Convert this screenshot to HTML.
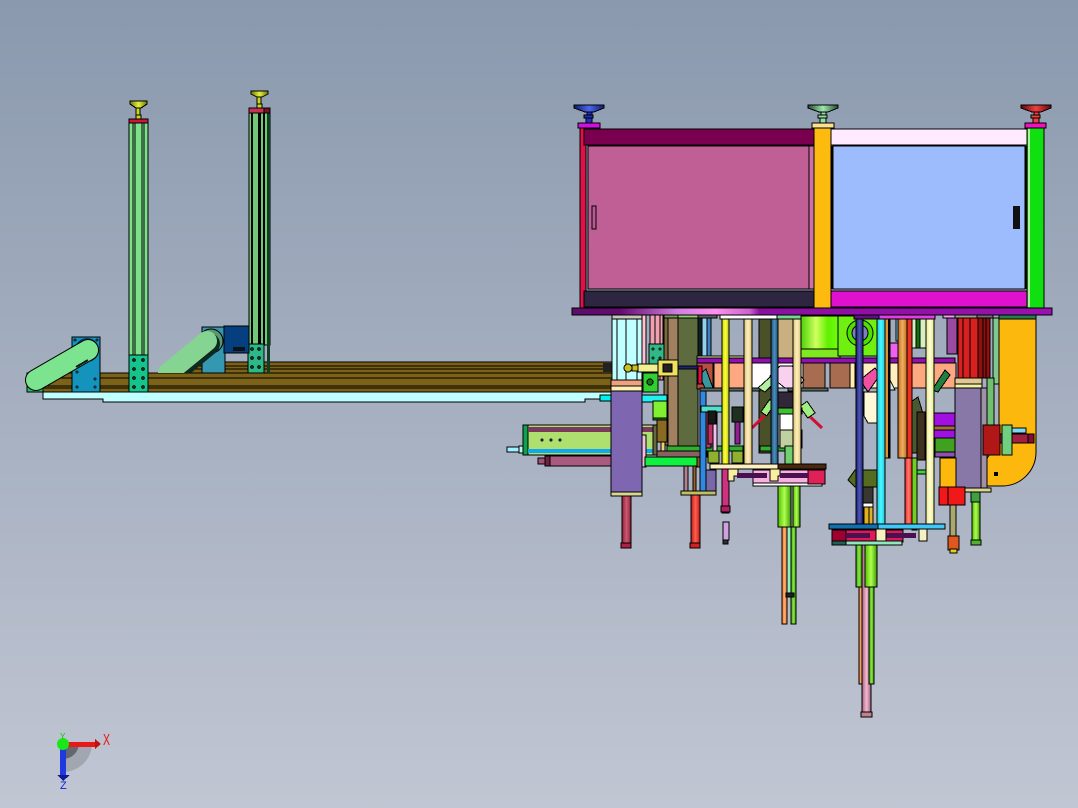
<!DOCTYPE html>
<html><head><meta charset="utf-8"><style>
html,body{margin:0;padding:0;background:#a0abba}
svg{display:block}
rect,path,circle,ellipse,polygon{stroke:#000;stroke-width:1}
.n{stroke:none}
line{stroke:#000;stroke-width:1}
</style></head><body>
<svg width="1078" height="808" viewBox="0 0 1078 808" xmlns="http://www.w3.org/2000/svg" shape-rendering="crispEdges">
<defs>
<linearGradient id="bg" x1="0" y1="0" x2="0" y2="1"><stop offset="0" stop-color="#8a99ae"/><stop offset="1" stop-color="#c1c6d3"/></linearGradient>
<linearGradient id="base" x1="0" y1="0" x2="1" y2="0"><stop offset="0" stop-color="#5a0f6a"/><stop offset=".1" stop-color="#650a70"/><stop offset=".22" stop-color="#d080e0"/><stop offset=".3" stop-color="#ff90f0"/><stop offset=".37" stop-color="#d060d0"/><stop offset=".39" stop-color="#8a10a0"/><stop offset="1" stop-color="#9a10b0"/></linearGradient>
<linearGradient id="g1" x1="0" y1="0" x2="1" y2="0"><stop offset="0" stop-color="#4fc000"/><stop offset=".5" stop-color="#b0ff50"/><stop offset="1" stop-color="#3a9a00"/></linearGradient>
<linearGradient id="gm" x1="0" y1="0" x2="1" y2="0"><stop offset="0" stop-color="#3fd000"/><stop offset=".4" stop-color="#d0ff60"/><stop offset=".7" stop-color="#60f000"/><stop offset="1" stop-color="#70ff10"/></linearGradient>
<linearGradient id="pk" x1="0" y1="0" x2="1" y2="0"><stop offset="0" stop-color="#a06080"/><stop offset=".5" stop-color="#f5b8d0"/><stop offset="1" stop-color="#a06080"/></linearGradient>
<linearGradient id="rd" x1="0" y1="0" x2="1" y2="0"><stop offset="0" stop-color="#c01818"/><stop offset=".5" stop-color="#ff6050"/><stop offset="1" stop-color="#c01818"/></linearGradient>
<linearGradient id="rd2" x1="0" y1="0" x2="1" y2="0"><stop offset="0" stop-color="#8a2038"/><stop offset=".5" stop-color="#d05870"/><stop offset="1" stop-color="#8a2038"/></linearGradient>
<linearGradient id="yl" x1="0" y1="0" x2="1" y2="0"><stop offset="0" stop-color="#c8d800"/><stop offset=".5" stop-color="#ffff40"/><stop offset="1" stop-color="#b0c000"/></linearGradient>
<linearGradient id="cr" x1="0" y1="0" x2="1" y2="0"><stop offset="0" stop-color="#d8c070"/><stop offset=".5" stop-color="#fff0c0"/><stop offset="1" stop-color="#d8c070"/></linearGradient>
<linearGradient id="bl" x1="0" y1="0" x2="1" y2="0"><stop offset="0" stop-color="#204a70"/><stop offset=".5" stop-color="#4a90c0"/><stop offset="1" stop-color="#204a70"/></linearGradient>
<linearGradient id="nv" x1="0" y1="0" x2="1" y2="0"><stop offset="0" stop-color="#1a1f70"/><stop offset=".5" stop-color="#5058b8"/><stop offset="1" stop-color="#1a1f70"/></linearGradient>
<linearGradient id="cy" x1="0" y1="0" x2="1" y2="0"><stop offset="0" stop-color="#10c8e0"/><stop offset=".5" stop-color="#50f8ff"/><stop offset="1" stop-color="#10c8e0"/></linearGradient>
<linearGradient id="or" x1="0" y1="0" x2="1" y2="0"><stop offset="0" stop-color="#c06a20"/><stop offset=".5" stop-color="#f0b060"/><stop offset="1" stop-color="#c06a20"/></linearGradient>
<linearGradient id="ry" x1="0" y1="0" x2="1" y2="0"><stop offset="0" stop-color="#f02020"/><stop offset=".5" stop-color="#ff8070"/><stop offset="1" stop-color="#f02020"/></linearGradient>
<linearGradient id="cl" x1="0" y1="0" x2="1" y2="0"><stop offset="0" stop-color="#e8e890"/><stop offset=".5" stop-color="#ffffd0"/><stop offset="1" stop-color="#e8e890"/></linearGradient>
<linearGradient id="gr" x1="0" y1="0" x2="1" y2="0"><stop offset="0" stop-color="#309a10"/><stop offset=".5" stop-color="#90e840"/><stop offset="1" stop-color="#309a10"/></linearGradient>
<linearGradient id="og" x1="0" y1="0" x2="1" y2="0"><stop offset="0" stop-color="#f07028"/><stop offset=".5" stop-color="#ffb070"/><stop offset="1" stop-color="#f07028"/></linearGradient>
<linearGradient id="wb" x1="0" y1="0" x2="1" y2="0"><stop offset="0" stop-color="#101a70"/><stop offset=".5" stop-color="#4a68e8"/><stop offset="1" stop-color="#101a70"/></linearGradient>
<linearGradient id="wg" x1="0" y1="0" x2="1" y2="0"><stop offset="0" stop-color="#204a30"/><stop offset=".5" stop-color="#a0e8b0"/><stop offset="1" stop-color="#204a30"/></linearGradient>
<linearGradient id="wr" x1="0" y1="0" x2="1" y2="0"><stop offset="0" stop-color="#600808"/><stop offset=".5" stop-color="#f04040"/><stop offset="1" stop-color="#600808"/></linearGradient>
<linearGradient id="wy" x1="0" y1="0" x2="1" y2="0"><stop offset="0" stop-color="#707800"/><stop offset=".5" stop-color="#e8f040"/><stop offset="1" stop-color="#707800"/></linearGradient>
</defs>
<rect class="n" width="1078" height="808" fill="url(#bg)"/>

<!-- conveyor rails -->
<rect x="190" y="362" width="422" height="11" fill="#7b6216"/>
<line x1="190" y1="366" x2="612" y2="366"/><line x1="190" y1="369" x2="612" y2="369"/>
<rect x="27" y="373" width="16" height="19" fill="#20c070"/>
<rect x="43" y="373" width="569" height="19" fill="#7b6216"/>
<line x1="43" y1="378" x2="612" y2="378"/><line x1="43" y1="386" x2="612" y2="386"/><line x1="43" y1="388" x2="612" y2="388"/>
<path d="M43 392H612V399H585V402H103V399H43Z" fill="#c0ffff"/>
<rect x="600" y="395" width="12" height="6" fill="#00f0f0"/>
<rect class="n" x="603" y="363" width="9" height="9" fill="#222"/>

<!-- left column -->
<rect x="129" y="122" width="19" height="234" fill="#7ce08a"/>
<line x1="133" y1="122" x2="133" y2="355"/><line x1="135" y1="122" x2="135" y2="355"/><line x1="142" y1="122" x2="142" y2="355"/><line x1="144" y1="122" x2="144" y2="355"/>
<rect x="129" y="119" width="19" height="4" fill="#d0143c"/>
<rect x="129" y="355" width="19" height="37" fill="#14c48c"/>
<g fill="#103020"><circle class="n" cx="134" cy="360" r="2"/><circle class="n" cx="143" cy="360" r="2"/><circle class="n" cx="134" cy="369" r="2"/><circle class="n" cx="143" cy="369" r="2"/><circle class="n" cx="134" cy="378" r="2"/><circle class="n" cx="143" cy="378" r="2"/><circle class="n" cx="134" cy="387" r="2"/><circle class="n" cx="143" cy="387" r="2"/></g>
<rect x="136" y="115" width="5" height="4" fill="#c8d820"/><rect x="136" y="108" width="4" height="7" fill="#c8d820"/>
<path d="M130 101H147V104L141 108H136L130 104Z" fill="url(#wy)"/>

<!-- second column -->
<rect x="249" y="113" width="21" height="232" fill="#70c878"/>
<rect class="n" x="251" y="113" width="2" height="232" fill="#000"/><rect class="n" x="258" y="113" width="3" height="232" fill="#000"/><rect class="n" x="263" y="113" width="2" height="232" fill="#000"/><rect class="n" x="267" y="113" width="3" height="260" fill="#0f3f20"/>
<rect x="249" y="108" width="15" height="5" fill="#c83058"/><rect x="264" y="108" width="6" height="5" fill="#7a1028"/>
<rect x="248" y="344" width="16" height="29" fill="#2cb888"/>
<g fill="#103020"><circle class="n" cx="252" cy="349" r="2"/><circle class="n" cx="259" cy="349" r="2"/><circle class="n" cx="252" cy="358" r="2"/><circle class="n" cx="259" cy="358" r="2"/><circle class="n" cx="252" cy="367" r="2"/><circle class="n" cx="259" cy="367" r="2"/></g>
<rect x="257" y="104" width="5" height="4" fill="#c8d820"/><rect x="257" y="97" width="4" height="7" fill="#c8d820"/>
<path d="M251 91H268V94L262 97H257L251 94Z" fill="url(#wy)"/>

<!-- motor & blue plates -->
<rect x="202" y="327" width="23" height="46" fill="#3498b0"/>
<rect x="224" y="326" width="25" height="27" fill="#053f80"/>
<rect class="n" x="233" y="347" width="12" height="4" fill="#111"/>
<rect x="72" y="337" width="28" height="55" fill="#1494bc"/>
<g fill="#103040"><circle class="n" cx="77" cy="372" r="1.5"/><circle class="n" cx="95" cy="379" r="1.5"/><circle class="n" cx="77" cy="387" r="1.5"/><circle class="n" cx="95" cy="387" r="1.5"/><circle class="n" cx="75" cy="340" r="1.5"/><circle class="n" cx="97" cy="340" r="1.5"/></g>
<circle cx="87" cy="350" r="11" fill="none" style="stroke:#0a3a70;stroke-width:2" shape-rendering="auto"/>
<line x1="36" y1="380" x2="88" y2="350" style="stroke:#000;stroke-width:22;stroke-linecap:round" shape-rendering="auto"/>
<line x1="36" y1="380" x2="88" y2="350" style="stroke:#7ce48e;stroke-width:20;stroke-linecap:round" shape-rendering="auto"/>
<path d="M76 367L88 360" style="stroke:#102020;stroke-width:2" fill="none"/>
<circle cx="211" cy="341" r="12" fill="#5a9a70" shape-rendering="auto"/>
<svg x="0" y="0" width="1078" height="373" overflow="hidden">
<line x1="170" y1="376" x2="209" y2="344" style="stroke:#0e2a20;stroke-width:22;stroke-linecap:round" shape-rendering="auto"/>
<line x1="168" y1="373" x2="207" y2="341" style="stroke:#86d492;stroke-width:20;stroke-linecap:round" shape-rendering="auto"/>
</svg>

<!-- cabinet -->
<rect x="580" y="128" width="6" height="180" fill="#e01048"/>
<rect x="584" y="129" width="230" height="16" fill="#7a004f"/>
<rect x="588" y="146" width="221" height="143" fill="#bf5f95"/>
<rect x="809" y="146" width="5" height="143" fill="#d070a8"/>
<rect x="592" y="206" width="4" height="23" fill="#b85890"/>
<rect x="584" y="291" width="230" height="16" fill="#2e2540"/>
<rect x="831" y="129" width="196" height="16" fill="#ffeaff"/>
<rect x="833" y="146" width="192" height="143" fill="#9dbcfd"/>
<rect class="n" x="831" y="146" width="2" height="143" fill="#000"/><rect class="n" x="1025" y="146" width="2" height="143" fill="#000"/>
<rect class="n" x="1013" y="206" width="7" height="23" fill="#111"/>
<rect x="831" y="291" width="196" height="16" fill="#e010cf"/>
<rect x="814" y="128" width="17" height="180" fill="#fdbb10"/>
<rect x="1027" y="128" width="17" height="180" fill="#10e010"/>
<rect class="n" x="1028" y="129" width="2" height="178" fill="#b0f0a0"/>
<rect x="578" y="123" width="22" height="5" fill="#d010e0"/>
<rect x="812" y="123" width="22" height="5" fill="#fde090"/>
<rect x="1025" y="123" width="21" height="5" fill="#f010c0"/>
<rect x="572" y="308" width="480" height="7" fill="url(#base)"/>
<!-- handwheels -->
<rect x="586" y="117" width="6" height="6" fill="#2030c0"/><rect x="584" y="115" width="9" height="3" fill="#2030c0"/><rect x="587" y="111" width="5" height="4" fill="#2030c0"/>
<path d="M574 105H604V108L594 112H585L574 108Z" fill="url(#wb)"/>
<rect x="820" y="117" width="6" height="6" fill="#90e0a0"/><rect x="818" y="115" width="9" height="3" fill="#90e0a0"/><rect x="821" y="111" width="5" height="4" fill="#90e0a0"/>
<path d="M808 105H838V108L828 112H819L808 108Z" fill="url(#wg)"/>
<rect x="1033" y="117" width="6" height="6" fill="#f04040"/><rect x="1031" y="115" width="9" height="3" fill="#f04040"/><rect x="1034" y="111" width="5" height="4" fill="#f04040"/>
<path d="M1021 105H1051V108L1041 112H1032L1021 108Z" fill="url(#wr)"/>

<!-- under-plate top row -->
<rect x="612" y="319" width="30" height="61" fill="#c0ffff"/>
<line x1="617" y1="319" x2="617" y2="380"/><line x1="626" y1="319" x2="626" y2="380"/><line x1="637" y1="319" x2="637" y2="380"/>
<rect x="642" y="315" width="4" height="65" fill="#ffc0d0"/>
<rect x="650" y="315" width="13" height="65" fill="#f0a0b0"/><line x1="655" y1="315" x2="655" y2="380"/><line x1="660" y1="315" x2="660" y2="380"/>
<rect x="664" y="315" width="4" height="130" fill="#7a6a40"/>
<rect x="668" y="315" width="10" height="132" fill="#a08060"/>
<rect x="678" y="315" width="20" height="132" fill="#5e6b3e"/>
<rect x="698" y="318" width="4" height="38" fill="#102020"/><rect x="702" y="318" width="5" height="38" fill="#90d0f0"/><rect x="707" y="318" width="4" height="38" fill="#4080c0"/>
<rect x="759" y="318" width="12" height="135" fill="#4a5028"/>
<rect x="777" y="318" width="16" height="45" fill="#c8b080"/>
<rect x="649" y="344" width="15" height="22" fill="#30b888"/>
<g fill="#103020"><circle class="n" cx="653" cy="349" r="1.6"/><circle class="n" cx="660" cy="349" r="1.6"/><circle class="n" cx="653" cy="358" r="1.6"/><circle class="n" cx="660" cy="358" r="1.6"/></g>
<rect x="697" y="356" width="48" height="3" fill="#f0f0a0"/>
<rect x="697" y="358" width="258" height="5" fill="#9010b0"/>
<rect x="697" y="363" width="16" height="26" fill="#b85040"/>
<rect x="714" y="363" width="40" height="26" fill="#fca880"/>
<rect x="752" y="363" width="51" height="25" fill="#fff"/>
<rect x="803" y="363" width="22" height="25" fill="#a86c50"/>
<rect x="830" y="363" width="20" height="25" fill="#a86c50"/>
<rect x="850" y="363" width="5" height="25" fill="#ffeeb0"/>
<rect x="863" y="363" width="14" height="25" fill="#ffeec0"/>
<rect x="885" y="363" width="14" height="25" fill="#ffeec0"/>
<rect x="912" y="363" width="14" height="25" fill="#fca880"/>
<rect x="934" y="363" width="22" height="25" fill="#fca880"/>
<rect x="700" y="388" width="60" height="3" fill="#5a6a60"/>
<rect x="788" y="388" width="40" height="3" fill="#5a6a60"/>
<path d="M699 375L706 369L713 388H705Z" fill="#3898a0"/>
<rect x="698" y="366" width="4" height="18" fill="#e01040"/>
<path d="M758 388L780 368L785 372L765 392Z" fill="#b0f0a0"/>
<path d="M780 366L770 376L785 388H798L804 380L792 366Z" fill="#f8d0f0"/>
<path d="M868 392L860 380L875 368L880 375Z" fill="#f050a0"/>
<path d="M885 370L878 390H895Z" fill="#c8f0f8"/>
<path d="M932 390L945 370L950 375L938 392Z" fill="#208040"/>

<!-- mid-level mechanism left -->
<rect x="611" y="380" width="31" height="6" fill="#f0a080"/>
<rect x="611" y="386" width="31" height="5" fill="#fbf0b0"/>
<rect x="642" y="395" width="25" height="7" fill="#20f0f0"/>
<rect x="637" y="364" width="24" height="8" fill="#f0f090"/>
<circle cx="628" cy="368" r="4" fill="#c8c020"/>
<rect x="632" y="365" width="6" height="6" fill="#c8c020"/>
<rect x="658" y="360" width="20" height="16" fill="#f0e060"/>
<rect x="663" y="364" width="9" height="8" fill="#222"/>
<rect x="678" y="366" width="20" height="3" fill="#202080"/>
<rect x="643" y="373" width="15" height="19" fill="#30d030"/><circle cx="650" cy="382" r="3" fill="#187018"/>
<rect x="653" y="401" width="14" height="17" fill="#80f030"/><rect x="653" y="418" width="14" height="2" fill="#208020"/>
<rect x="657" y="420" width="10" height="22" fill="#8a6a20"/>
<rect x="661" y="442" width="4" height="20" fill="#f0d070"/>
<!-- left cylinder -->
<rect x="523" y="425" width="132" height="30" fill="#ade06f"/>
<rect x="523" y="425" width="5" height="30" fill="#10a050"/>
<rect class="n" x="528" y="427" width="127" height="5" fill="#7a3a60"/>
<rect class="n" x="528" y="449" width="127" height="4" fill="#10a8f0"/>
<g fill="#202020"><circle class="n" cx="542" cy="440" r="1.6"/><circle class="n" cx="551" cy="440" r="1.6"/><circle class="n" cx="560" cy="440" r="1.6"/></g>
<rect x="507" y="447" width="16" height="5" fill="#a0f0ff"/>
<rect x="519" y="446" width="4" height="7" fill="#c0f0f0"/>
<rect x="545" y="456" width="67" height="10" fill="#a85a80"/>
<rect x="538" y="458" width="7" height="6" fill="#a05070"/><rect x="545" y="456" width="5" height="10" fill="#702040"/>
<rect x="642" y="435" width="4" height="32" fill="#f0c0e0"/>
<rect x="653" y="425" width="4" height="30" fill="#686840"/>
<rect x="645" y="457" width="52" height="9" fill="#10f040"/>
<rect x="697" y="456" width="9" height="11" fill="#8a5a20"/>
<rect x="657" y="451" width="50" height="6" fill="#8a6060"/>
<rect x="700" y="425" width="6" height="26" fill="#8a5060"/>
<rect x="667" y="446" width="76" height="5" fill="#30b030"/>
<rect x="760" y="446" width="40" height="5" fill="#30b030"/>
<rect x="684" y="466" width="4" height="26" fill="#b08090"/>
<rect x="693" y="466" width="3" height="26" fill="#a06030"/>
<rect x="700" y="391" width="6" height="101" fill="#3088e0"/>
<rect x="706" y="470" width="10" height="24" fill="#7868a8"/>
<rect x="706" y="408" width="5" height="40" fill="#a04060"/>
<rect x="713" y="408" width="4" height="60" fill="#f0c0f0"/>
<rect x="701" y="406" width="26" height="6" fill="#50e0d0"/>
<rect x="708" y="411" width="8" height="13" fill="#181818"/>
<rect x="708" y="424" width="5" height="20" fill="#c03060"/>
<rect x="732" y="407" width="11" height="15" fill="#203020"/>
<rect x="735" y="422" width="5" height="22" fill="#902090"/>
<rect x="708" y="451" width="11" height="12" fill="#90b030"/>
<rect x="732" y="451" width="11" height="12" fill="#90b030"/>
<!-- center diagonal -->
<line x1="752" y1="428" x2="770" y2="410" style="stroke:#d01030;stroke-width:3" shape-rendering="auto"/>
<line x1="822" y1="428" x2="805" y2="412" style="stroke:#d01030;stroke-width:3" shape-rendering="auto"/>
<rect x="765" y="400" width="7" height="15" fill="#a0f080" transform="rotate(35 768 407)"/>
<rect x="803" y="403" width="9" height="14" fill="#a0f080" transform="rotate(-35 807 410)"/>
<rect x="777" y="392" width="16" height="18" fill="#302838"/>
<rect x="777" y="408" width="25" height="6" fill="#40c030"/>
<rect x="780" y="414" width="14" height="16" fill="#fff"/>
<rect x="780" y="430" width="22" height="18" fill="#c0d0a0"/>
<rect x="785" y="446" width="14" height="20" fill="#70d070"/>

<!-- gears and green motor -->
<rect x="800" y="316" width="40" height="42" fill="url(#gm)"/>
<rect x="800" y="349" width="40" height="9" fill="#80e820"/>
<rect x="838" y="316" width="40" height="40" fill="#70f010"/>
<circle cx="860" cy="333" r="13" fill="#50e000" shape-rendering="auto"/>
<circle cx="860" cy="333" r="8" fill="#7a80c0" shape-rendering="auto"/>
<!-- right side area -->
<rect x="896" y="319" width="3" height="22" fill="#80c8f0"/>
<rect x="890" y="343" width="8" height="15" fill="#f060f0"/>
<rect x="912" y="318" width="14" height="30" fill="#d8f0c0"/>
<rect x="916" y="318" width="4" height="30" fill="#107010"/>
<rect x="947" y="318" width="10" height="36" fill="#9a4aa0"/>
<rect x="884" y="318" width="6" height="140" fill="#e09030"/>
<rect x="888" y="318" width="2" height="140" class="n" fill="#000"/>
<path d="M864 392H884V412L877 423H868L864 416Z" fill="#fff8d8"/>
<path d="M899 410L918 397L925 420V453H899Z" fill="#4a5a30"/>
<rect x="917" y="412" width="8" height="48" fill="#403020"/>
<rect x="934" y="413" width="21" height="25" fill="#a010e0"/>
<rect x="934" y="426" width="21" height="4" fill="#a07030"/>
<rect x="935" y="438" width="20" height="14" fill="#40a020"/>
<rect x="935" y="452" width="20" height="5" fill="#9050b0"/>
<rect x="916" y="470" width="12" height="4" fill="#40d040"/>
<rect x="912" y="458" width="5" height="72" fill="#70d020"/>
<!-- olive assembly -->
<path d="M855 470H878L885 478L878 487H855L848 480Z" fill="#556b20" shape-rendering="auto"/>
<rect x="863" y="487" width="10" height="16" fill="#383830"/>
<rect x="863" y="503" width="10" height="4" fill="#fff"/>
<rect x="864" y="507" width="9" height="17" fill="#e0b020"/>
<line x1="869" y1="507" x2="869" y2="524"/>

<!-- long tubes -->
<rect x="722" y="318" width="7" height="146" fill="url(#yl)"/>
<rect x="744" y="318" width="8" height="146" fill="url(#cr)"/>
<rect x="771" y="318" width="7" height="146" fill="url(#bl)"/>
<rect x="793" y="318" width="8" height="146" fill="url(#cr)"/>
<rect x="856" y="318" width="7" height="206" fill="url(#nv)"/>
<rect x="877" y="318" width="8" height="206" fill="url(#cy)"/>
<rect x="905" y="457" width="7" height="67" fill="url(#ry)"/>
<rect x="907" y="318" width="5" height="140" fill="#f03020"/>
<rect x="898" y="318" width="9" height="140" fill="url(#or)"/>
<rect x="926" y="318" width="8" height="206" fill="url(#cl)"/>

<!-- top plate strips -->
<rect x="612" y="315" width="30" height="4" fill="#c8c8b8"/>
<rect x="664" y="315" width="14" height="3" fill="#70a050"/>
<rect x="678" y="315" width="20" height="3" fill="#90d070"/>
<rect x="698" y="315" width="19" height="3" fill="#606060"/>
<rect x="720" y="315" width="57" height="4" fill="#fff"/>
<rect x="777" y="315" width="24" height="4" fill="#70d890"/>
<rect x="854" y="315" width="25" height="4" fill="#601080"/>
<rect x="879" y="315" width="56" height="4" fill="#e040e0"/>
<rect x="943" y="315" width="12" height="3" fill="#f0a0f0"/>
<rect x="955" y="315" width="22" height="3" fill="#a0a090"/>
<rect x="977" y="315" width="16" height="3" fill="#707070"/>

<!-- red columns and grey block -->
<rect x="958" y="318" width="20" height="60" fill="#d82020"/>
<line x1="963" y1="318" x2="963" y2="378"/><line x1="970" y1="318" x2="970" y2="378"/>
<rect x="978" y="318" width="12" height="60" fill="#901010"/>
<line x1="983" y1="318" x2="983" y2="378"/><line x1="986" y1="318" x2="986" y2="378"/>
<!-- big orange bracket -->
<path d="M999 316H1036V452A34 34 0 0 1 1002 486H986V460L999 440Z" fill="#fdb80e" shape-rendering="auto"/>
<rect x="999" y="315" width="37" height="4" fill="#208050"/>
<rect class="n" x="994" y="472" width="4" height="4" fill="#000"/>
<rect x="993" y="318" width="6" height="66" fill="#80c890"/>
<rect x="987" y="378" width="7" height="58" fill="#70c070"/>
<rect x="981" y="388" width="6" height="102" fill="#a090a8"/>
<rect x="955" y="378" width="27" height="6" fill="#e0c890"/>
<rect x="955" y="384" width="27" height="4" fill="#f0f0a0"/>
<rect x="955" y="388" width="26" height="100" fill="#8878a8"/>
<rect x="955" y="488" width="36" height="4" fill="#d8d890"/>
<rect x="983" y="425" width="17" height="30" fill="#b01818"/>
<rect x="1000" y="434" width="30" height="9" fill="#a02040"/>
<rect x="1028" y="434" width="6" height="9" fill="#801030"/>
<rect x="1002" y="425" width="10" height="30" fill="#70d080"/>
<rect x="1012" y="428" width="14" height="5" fill="#80d8f0"/>
<!-- orange/red box -->
<rect x="940" y="458" width="16" height="29" fill="#fdb80e"/>
<rect x="939" y="487" width="26" height="18" fill="#f01818"/>
<line x1="948" y1="487" x2="948" y2="505"/>
<rect x="950" y="505" width="6" height="31" fill="#a8a870"/>
<rect x="948" y="536" width="11" height="14" fill="#e05820"/>
<rect x="950" y="549" width="7" height="4" fill="#e0d020"/>
<rect x="971" y="492" width="9" height="10" fill="#40a040"/>
<rect x="972" y="502" width="8" height="38" fill="url(#g1)"/>
<rect x="971" y="540" width="10" height="5" fill="#50b030"/>

<!-- purple block -->
<rect x="611" y="391" width="31" height="101" fill="#7e66b0"/>
<rect x="611" y="492" width="31" height="4" fill="#d8d890"/>
<rect x="622" y="496" width="9" height="49" fill="url(#rd2)"/>
<rect x="621" y="543" width="10" height="5" fill="#b02040"/>
<rect x="681" y="491" width="35" height="4" fill="#c0c060"/>
<rect x="691" y="495" width="9" height="49" fill="url(#rd)"/>
<rect x="690" y="543" width="10" height="5" fill="#d02020"/>
<rect x="722" y="469" width="7" height="44" fill="#d03080"/>
<rect x="721" y="506" width="9" height="6" fill="#b02060"/>
<rect x="723" y="522" width="6" height="18" fill="#d0a0e0"/>
<rect x="723" y="540" width="5" height="4" fill="#303030"/>

<!-- lower plates -->
<rect x="710" y="464" width="68" height="5" fill="#ffeec0"/>
<rect x="778" y="464" width="48" height="5" fill="#4a2810"/>
<path d="M728 469H738V476H734V481H728Z" fill="#f8f0a0"/>
<rect x="753" y="470" width="72" height="13" fill="#f8b0e0"/>
<rect x="753" y="483" width="69" height="3" fill="#fff"/>
<path d="M770 469H780V476H778V481H770Z" fill="#f8f0a0"/>
<rect class="n" x="737" y="473" width="30" height="5" fill="#4a1050"/>
<rect x="808" y="470" width="17" height="14" fill="#e02058"/>
<rect class="n" x="780" y="473" width="28" height="5" fill="#4a1050"/>
<!-- tubes under 1 -->
<rect x="778" y="486" width="13" height="41" fill="url(#g1)"/>
<rect x="793" y="486" width="7" height="41" fill="url(#g1)"/>
<rect x="782" y="527" width="5" height="97" fill="url(#og)"/>
<rect x="787" y="527" width="5" height="70" fill="#90f0c0"/>
<rect x="791" y="527" width="5" height="97" fill="url(#gr)"/>
<rect x="786" y="593" width="8" height="4" fill="#202020"/>
<!-- tubes under 2 -->
<rect x="859" y="587" width="4" height="97" fill="url(#og)"/>
<rect x="862" y="545" width="9" height="167" fill="url(#pk)"/>
<rect x="869" y="587" width="5" height="97" fill="url(#gr)"/>
<rect x="856" y="545" width="6" height="42" fill="url(#gr)"/>
<rect x="865" y="545" width="12" height="42" fill="url(#g1)"/>
<rect x="861" y="712" width="11" height="5" fill="#c08090"/>
<!-- plate 2 -->
<rect x="829" y="524" width="49" height="5" fill="#1070b0"/>
<rect x="878" y="524" width="67" height="5" fill="#40c8f8"/>
<rect x="832" y="530" width="71" height="12" fill="#e01858"/>
<rect x="832" y="530" width="14" height="12" fill="#a00030"/>
<rect class="n" x="846" y="533" width="24" height="5" fill="#4a1050"/>
<rect class="n" x="884" y="533" width="32" height="5" fill="#4a1050"/>
<rect x="876" y="529" width="10" height="12" fill="#f8f0c0"/>
<rect x="919" y="529" width="8" height="12" fill="#f8f0c0"/>
<rect x="832" y="541" width="70" height="4" fill="#90e8c0"/>
<rect x="832" y="541" width="14" height="4" fill="#206050"/>

<!-- triad -->
<path d="M63 743H92A29 29 0 0 1 63 772Z" class="n" fill="#8b8e96" opacity=".55" shape-rendering="auto"/>
<path d="M63 743H79A16 16 0 0 1 63 759Z" class="n" fill="#55585f" opacity=".8" shape-rendering="auto"/>
<rect class="n" x="66" y="742" width="30" height="5" fill="#e81818"/>
<polygon class="n" points="95,739 101,744 95,749" fill="#c01010"/>
<rect class="n" x="60" y="746" width="6" height="29" fill="#2038e0"/>
<polygon class="n" points="57,775 70,775 63,781" fill="#101a90"/>
<circle class="n" cx="63" cy="744" r="6" fill="#18e818" shape-rendering="auto"/>
<text x="103" y="745" font-family="Liberation Sans, sans-serif" font-size="16" fill="#f01010" textLength="7" lengthAdjust="spacingAndGlyphs">X</text>
<text x="60" y="739" font-family="Liberation Sans, sans-serif" font-size="8" fill="#10c010">Y</text>
<text x="60" y="789" font-family="Liberation Sans, sans-serif" font-size="11" fill="#1020e0">Z</text>
</svg>
</body></html>
